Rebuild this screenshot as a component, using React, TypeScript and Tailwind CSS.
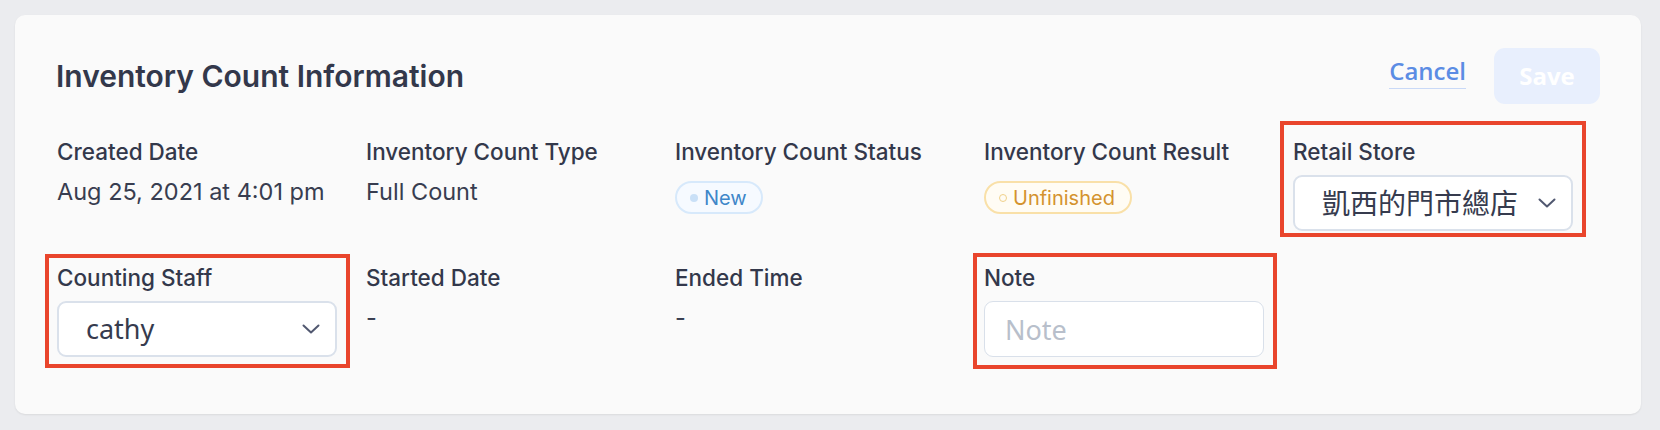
import React from "react";

const Chevron = () => (
  <svg width="18" height="10" viewBox="0 0 18 10" fill="none" className="shrink-0">
    <polyline points="1.5,1.5 9,8.5 16.5,1.5" stroke="#515870" strokeWidth="2" strokeLinecap="round" strokeLinejoin="round" />
  </svg>
);

const Label = ({ children }: { children: React.ReactNode }) => (
  <div className="text-[22.5px] leading-[33px] font-medium text-[#33384b]">{children}</div>
);

const Value = ({ children }: { children: React.ReactNode }) => (
  <div className="mt-[6px] text-[23.5px] leading-[36px] text-[#383d50]">{children}</div>
);

const SelectBox = ({ text, size }: { text: string; size: string }) => (
  <div className="mt-[7px] h-[56px] flex items-center justify-between rounded-[9px] border-2 border-[#dae1eb] bg-white pl-[27px] pr-[15px]">
    <span className={size + " text-[#363b4e] [font-family:'Noto_Sans','Noto_Sans_CJK_TC',sans-serif]"}>{text}</span>
    <Chevron />
  </div>
);

const RedBox = ({ cls }: { cls: string }) => (
  <div className={"pointer-events-none absolute border-[4px] border-[#e9452c] " + cls} />
);

export default function App() {
  return (
    <div className="min-h-[430px] bg-[#ebecef] pt-[15px] pl-[15px] [font-family:Inter,'Noto_Sans',sans-serif]">
      <div className="w-[1626px] h-[399px] rounded-[10px] bg-[#fafafa] shadow-[0_1px_2px_rgba(0,0,0,0.08)] pl-[42px] pr-[41px] pt-[33px]">
        <div className="flex items-center justify-between h-[56px]">
          <h1 className="-ml-[1px] text-[30px] leading-[38px] font-semibold text-[#33384b]">Inventory Count Information</h1>
          <div className="flex items-center gap-[28px]">
            <span className="mb-[6px] text-[24px] leading-[28px] pb-[3px] border-b border-[#c9d9f7] font-semibold text-[#5b8ce4] [font-family:'Open_Sans',sans-serif]">
              Cancel
            </span>
            <button className="h-[56px] w-[106px] rounded-[11px] bg-[#e8effd] text-white text-[24px] font-bold [font-family:'Open_Sans',sans-serif]">
              Save
            </button>
          </div>
        </div>

        <div className="mt-[31px] grid grid-cols-[repeat(5,280px)] gap-x-[29px] gap-y-[30px]">
          <div className="flex flex-col">
            <Label>Created Date</Label>
            <Value>Aug 25, 2021 at 4:01 pm</Value>
          </div>
          <div className="flex flex-col">
            <Label>Inventory Count Type</Label>
            <Value>Full Count</Value>
          </div>
          <div className="flex flex-col items-start">
            <Label>Inventory Count Status</Label>
            <div className="mt-[13px] inline-flex items-center h-[33px] rounded-full border-2 border-[#d7e9fb] bg-[#f6faff] pl-[13px] pr-[14px]">
              <span className="w-[8px] h-[8px] rounded-full bg-[#c9e0f7] mr-[6px]" />
              <span className="text-[20px] leading-[24px] text-[#3f87c9]">New</span>
            </div>
          </div>
          <div className="flex flex-col items-start">
            <Label>Inventory Count Result</Label>
            <div className="mt-[13px] inline-flex items-center h-[33px] rounded-full border-2 border-[#f9e0a8] bg-[#fffcf4] pl-[13px] pr-[15px]">
              <span className="w-[8px] h-[8px] rounded-full border border-[#f0d18a] mr-[6px]" />
              <span className="text-[20px] leading-[24px] text-[#d4932e]">Unfinished</span>
            </div>
          </div>
          <div className="relative flex flex-col">
            <Label>Retail Store</Label>
            <SelectBox text="凱西的門市總店" size="text-[28px]" />
            <RedBox cls="-left-[13px] -right-[13px] -top-[14px] -bottom-[6px]" />
          </div>

          <div className="relative flex flex-col">
            <Label>Counting Staff</Label>
            <SelectBox text="cathy" size="text-[27px]" />
            <RedBox cls="-left-[12px] -right-[13px] -top-[7px] -bottom-[11px]" />
          </div>
          <div className="flex flex-col">
            <Label>Started Date</Label>
            <Value>-</Value>
          </div>
          <div className="flex flex-col">
            <Label>Ended Time</Label>
            <Value>-</Value>
          </div>
          <div className="relative flex flex-col">
            <Label>Note</Label>
            <input
              placeholder="Note"
              className="mt-[7px] h-[56px] w-full rounded-[9px] border border-[#d9e0ea] bg-white pl-[20px] text-[27px] text-[#363b4e] placeholder:text-[#b8bfcb] outline-none [font-family:'Noto_Sans',sans-serif]"
            />
            <RedBox cls="-left-[11px] -right-[13px] -top-[8px] -bottom-[12px]" />
          </div>
        </div>
      </div>
    </div>
  );
}
